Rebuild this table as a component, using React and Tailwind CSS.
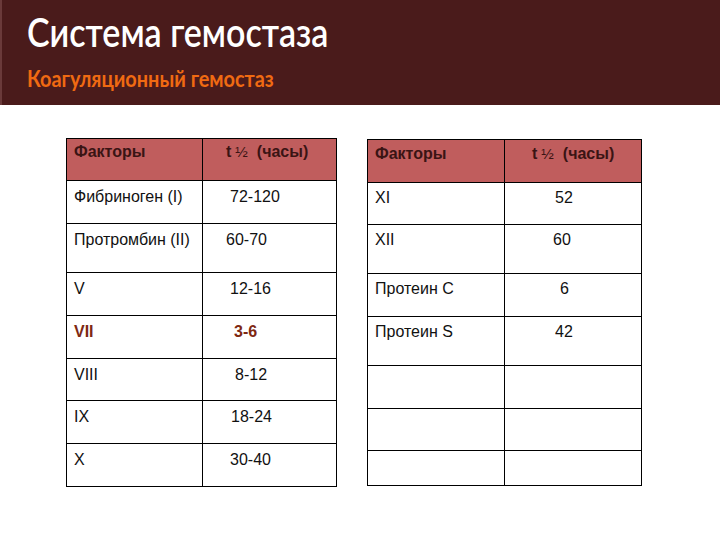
import React from "react";

const left = [
  { a: "Фибриноген (I)", b: "72-120" },
  { a: "Протромбин (II)", b: "60-70" },
  { a: "V", b: "12-16" },
  { a: "VII", b: "3-6", red: true },
  { a: "VIII", b: "8-12" },
  { a: "IX", b: "18-24" },
  { a: "X", b: "30-40" },
];
const leftPad = ["pl-[27px]", "pl-[23px]", "pl-[27px]", "pl-[31px]", "pl-[32px]", "pl-[28px]", "pl-[27px]"];
const leftH = ["h-[43px]", "h-[49px]", "h-[43px]", "h-[43px]", "h-[42px]", "h-[43px]", "h-[43px]"];

const right = [
  { a: "XI", b: "52" },
  { a: "XII", b: "60" },
  { a: "Протеин С", b: "6" },
  { a: "Протеин S", b: "42" },
  { a: "", b: "" },
  { a: "", b: "" },
  { a: "", b: "" },
];
const rightPad = ["pl-[50px]", "pl-[48px]", "pl-[55px]", "pl-[50px]", "", "", ""];
const rightH = ["h-[42px]", "h-[49px]", "h-[43px]", "h-[49px]", "h-[43px]", "h-[42px]", "h-[35px]"];

function Half() {
  return <span className="font-normal text-[15px] ml-[4px] mr-[9px]">½</span>;
}

export default function App() {
  return (
    <div className="w-[720px] h-[540px] bg-white overflow-hidden relative" style={{ fontFamily: '"Liberation Sans", Arial, sans-serif' }}>
      <div className="h-[105px] bg-[#4a1b1b] pl-[25px] pt-[9px] border-l-2 border-[#6a3a3a]">
        <div className="text-white text-[41px] leading-[46px] font-semibold scale-x-[0.83] origin-left whitespace-nowrap" style={{ fontFamily: 'Lato, "Open Sans", sans-serif' }}>
          Система гемостаза
        </div>
        <div className="text-[#f06a12] text-[23px] leading-[28px] font-bold mt-[9px] scale-x-[0.865] origin-left whitespace-nowrap" style={{ fontFamily: 'Lato, "Open Sans", sans-serif' }}>
          Коагуляционный гемостаз
        </div>
      </div>

      <div className="flex pl-[66px] pt-[33px] gap-[30px] items-start">
        <table className="border-collapse w-[271px] text-[16px] leading-[18px] text-[#111]">
          <tbody>
            <tr className="h-[42px] bg-[#c05d5d]">
              <td className="w-[136px] border-[1.5px] border-black align-top pl-[7px] pt-[4px] font-bold text-[#3a1414]">Факторы</td>
              <td className="border-[1.5px] border-black align-top pl-[23px] pt-[4px] font-bold text-[#3a1414] whitespace-nowrap">t<Half />(часы)</td>
            </tr>
            {left.map((r, i) => (
              <tr key={i} className={leftH[i]}>
                <td className={"border-[1.5px] border-black align-top pl-[7px] pt-[7px] " + (r.red ? "font-bold text-[#7e2812]" : "")}>{r.a}</td>
                <td className={"border-[1.5px] border-black align-top pt-[7px] " + leftPad[i] + (r.red ? " font-bold text-[#7e2812]" : "")}>{r.b}</td>
              </tr>
            ))}
          </tbody>
        </table>

        <table className="border-collapse w-[275px] text-[16px] leading-[18px] text-[#111] mt-[1px]">
          <tbody>
            <tr className="h-[43px] bg-[#c05d5d]">
              <td className="w-[137px] border-[1.5px] border-black align-top pt-[5px] pl-[7px] font-bold text-[#3a1414]">Факторы</td>
              <td className="border-[1.5px] border-black align-top pt-[5px] pl-[27px] font-bold text-[#3a1414] whitespace-nowrap">t<Half />(часы)</td>
            </tr>
            {right.map((r, i) => (
              <tr key={i} className={rightH[i]}>
                <td className="border-[1.5px] border-black align-top pl-[7px] pt-[6px]">{r.a}</td>
                <td className={"border-[1.5px] border-black align-top pt-[6px] " + rightPad[i]}>{r.b}</td>
              </tr>
            ))}
          </tbody>
        </table>
      </div>
    </div>
  );
}
